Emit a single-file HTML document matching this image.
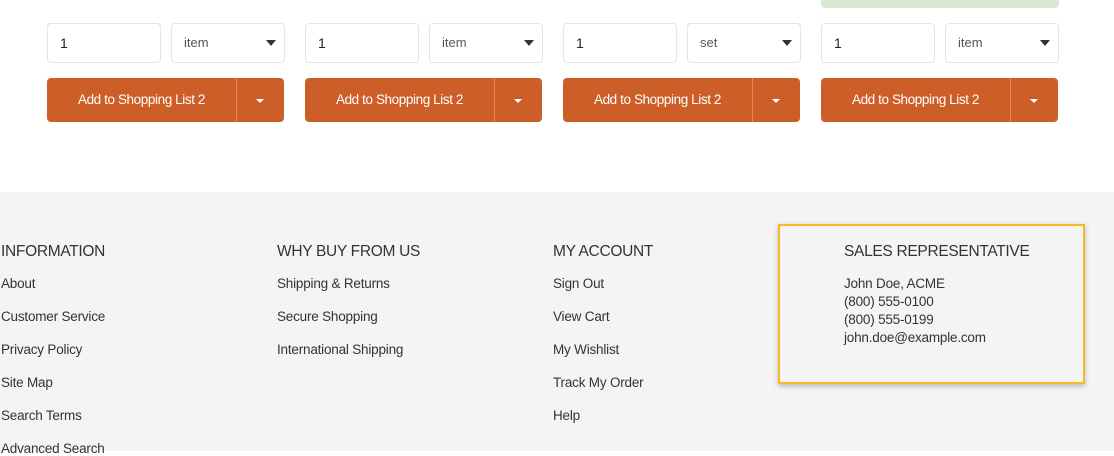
<!DOCTYPE html>
<html><head><style>
*{box-sizing:border-box;margin:0;padding:0}
body{width:1114px;height:451px;overflow:hidden;background:#fff;font-family:"Liberation Sans",sans-serif;color:#333;position:relative}
.a{position:absolute}
.inp{position:absolute;top:23px;height:40px;width:114px;border:1px solid #e5e5e5;border-radius:4px;font-size:14px;padding:11px 12px;color:#222;background:#fff}
.sel{color:#555;font-size:13px}
.sel:after{content:"";position:absolute;right:8px;top:16px;border-left:5.5px solid transparent;border-right:5.5px solid transparent;border-top:6px solid #333}
.btn{position:absolute;top:78px;height:44px;width:237px;background:#cd5e28;border-radius:4px;color:#fff;font-size:13.5px;letter-spacing:-0.4px}
.btn span{position:absolute;left:0;width:189px;top:14px;text-align:center}
.btn i{position:absolute;left:189px;top:0;bottom:0;width:1px;background:#e08a60}
.btn b{position:absolute;left:209px;top:21px;border-left:4px solid transparent;border-right:4px solid transparent;border-top:4px solid #fff}
.foot{position:absolute;top:192px;left:0;width:1114px;height:259px;background:#f4f4f4}
h3{position:absolute;top:243px;font-weight:normal;font-size:15.5px;letter-spacing:-0.3px;color:#333;text-transform:uppercase}
.lk{position:absolute;font-size:13.5px;letter-spacing:-0.2px;color:#333}
.box{position:absolute;left:778px;top:224px;width:307px;height:160px;border:2px solid #f5b922;box-shadow:0 2px 5px rgba(0,0,0,.25)}
</style></head><body>
<div class="a" style="left:821px;top:0;width:238px;height:8px;background:#dbe9d2;border-radius:0 0 4px 4px"></div>

<div class="inp" style="left:47px">1</div><div class="inp sel" style="left:171px">item</div>
<div class="inp" style="left:305px">1</div><div class="inp sel" style="left:429px">item</div>
<div class="inp" style="left:563px">1</div><div class="inp sel" style="left:687px">set</div>
<div class="inp" style="left:821px">1</div><div class="inp sel" style="left:945px">item</div>

<div class="btn" style="left:47px"><span>Add to Shopping List 2</span><i></i><b></b></div>
<div class="btn" style="left:305px"><span>Add to Shopping List 2</span><i></i><b></b></div>
<div class="btn" style="left:563px"><span>Add to Shopping List 2</span><i></i><b></b></div>
<div class="btn" style="left:821px"><span>Add to Shopping List 2</span><i></i><b></b></div>

<div class="foot"></div>
<h3 style="left:1px">Information</h3>
<div class="lk" style="left:1px;top:276px">About</div>
<div class="lk" style="left:1px;top:309px">Customer Service</div>
<div class="lk" style="left:1px;top:342px">Privacy Policy</div>
<div class="lk" style="left:1px;top:375px">Site Map</div>
<div class="lk" style="left:1px;top:408px">Search Terms</div>
<div class="lk" style="left:1px;top:441px">Advanced Search</div>

<h3 style="left:277px">Why buy from us</h3>
<div class="lk" style="left:277px;top:276px">Shipping &amp; Returns</div>
<div class="lk" style="left:277px;top:309px">Secure Shopping</div>
<div class="lk" style="left:277px;top:342px">International Shipping</div>

<h3 style="left:553px">My Account</h3>
<div class="lk" style="left:553px;top:276px">Sign Out</div>
<div class="lk" style="left:553px;top:309px">View Cart</div>
<div class="lk" style="left:553px;top:342px">My Wishlist</div>
<div class="lk" style="left:553px;top:375px">Track My Order</div>
<div class="lk" style="left:553px;top:408px">Help</div>

<div class="box"></div>
<h3 style="left:844px">Sales Representative</h3>
<div class="lk" style="left:844px;top:275px;line-height:18px;font-size:13.5px">John Doe, ACME<br>(800) 555-0100<br>(800) 555-0199<br>john.doe@example.com</div>
</body></html>
